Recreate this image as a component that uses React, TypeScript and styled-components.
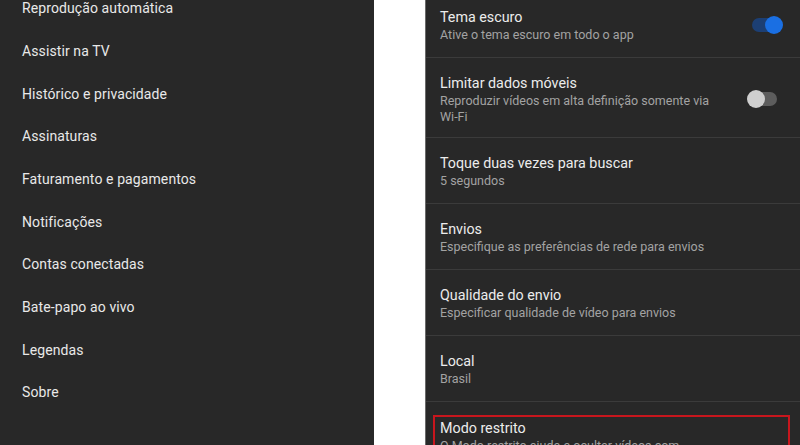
import React from "react";
import styled, { createGlobalStyle } from "styled-components";

const Global = createGlobalStyle`
  html, body { margin: 0; padding: 0; background: #ffffff; }
  body { font-family: Roboto, "Noto Sans", "Liberation Sans", sans-serif; overflow: hidden; }
`;

const Page = styled.div`
  display: grid;
  grid-template-columns: 374px 51px 375px;
  width: 800px;
  height: 445px;
  overflow: hidden;
  background: #ffffff;
`;

const LeftPanel = styled.div`
  background: #282828;
  height: 445px;
  overflow: hidden;
`;

const LeftList = styled.div`
  display: flex;
  flex-direction: column;
  margin-top: -13px;
`;

const LeftItem = styled.div`
  height: 42.67px;
  display: flex;
  align-items: center;
  padding-left: 22px;
  color: #e9e9e9;
  font-size: 14px;
  letter-spacing: 0.1px;
`;

const Gap = styled.div`
  background: #ffffff;
`;

const RightPanel = styled.div`
  background: #282828;
  height: 445px;
  overflow: hidden;
  border-left: 1px solid #6a6a6a;
`;

const RightList = styled.div`
  display: flex;
  flex-direction: column;
  margin-top: -8px;
`;

const Row = styled.div<{ $tight?: boolean }>`
  display: flex;
  align-items: center;
  justify-content: space-between;
  padding: 15px 17px ${(p) => (p.$tight ? "12px" : "14px")} 14px;
  border-bottom: 1px solid #3b3b3b;
`;

const TextBlock = styled.div`
  display: flex;
  flex-direction: column;
  max-width: 285px;
`;

const Title = styled.div`
  color: #ececec;
  font-size: 14.3px;
  line-height: 20px;
`;

const Sub = styled.div`
  color: #a3a3a3;
  font-size: 12.5px;
  line-height: 16px;
`;

const Highlight = styled.div`
  margin: 13px 10px 0 7px;
  border: 2px solid #c8161d;
  border-bottom: none;
  padding: 1px 5px 6px 5px;
`;

const Switch = styled.div`
  position: relative;
  width: 36px;
  height: 18px;
  flex-shrink: 0;
`;

const Track = styled.div<{ $on: boolean }>`
  position: absolute;
  left: 5px;
  right: 6px;
  top: 2px;
  height: 14px;
  border-radius: 7px;
  background: ${(p) => (p.$on ? "#1c3f74" : "#5d5d5d")};
`;

const Knob = styled.div<{ $on: boolean }>`
  position: absolute;
  top: 0;
  left: ${(p) => (p.$on ? "18px" : "0px")};
  width: 18px;
  height: 18px;
  border-radius: 50%;
  background: ${(p) => (p.$on ? "#1a6fe3" : "#cfcfcf")};
`;

const Toggle = ({ on }: { on: boolean }) => (
  <Switch>
    <Track $on={on} />
    <Knob $on={on} />
  </Switch>
);

const leftItems = [
  "Reprodução automática",
  "Assistir na TV",
  "Histórico e privacidade",
  "Assinaturas",
  "Faturamento e pagamentos",
  "Notificações",
  "Contas conectadas",
  "Bate-papo ao vivo",
  "Legendas",
  "Sobre",
];

type Setting = { title: string; sub: string; toggle?: boolean; tight?: boolean };

const settings: Setting[] = [
  { title: "Tema escuro", sub: "Ative o tema escuro em todo o app", toggle: true },
  {
    title: "Limitar dados móveis",
    sub: "Reproduzir vídeos em alta definição somente via Wi-Fi",
    toggle: false,
    tight: true,
  },
  { title: "Toque duas vezes para buscar", sub: "5 segundos" },
  { title: "Envios", sub: "Especifique as preferências de rede para envios" },
  { title: "Qualidade do envio", sub: "Especificar qualidade de vídeo para envios" },
  { title: "Local", sub: "Brasil" },
];

export default function App() {
  return (
    <>
      <Global />
      <Page>
        <LeftPanel>
          <LeftList>
            {leftItems.map((t) => (
              <LeftItem key={t}>{t}</LeftItem>
            ))}
          </LeftList>
        </LeftPanel>
        <Gap />
        <RightPanel>
          <RightList>
            {settings.map((s) => (
              <Row key={s.title} $tight={s.tight}>
                <TextBlock>
                  <Title>{s.title}</Title>
                  <Sub>{s.sub}</Sub>
                </TextBlock>
                {s.toggle !== undefined && <Toggle on={s.toggle} />}
              </Row>
            ))}
            <Highlight>
              <Title>Modo restrito</Title>
              <Sub>O Modo restrito ajuda a ocultar vídeos com</Sub>
            </Highlight>
          </RightList>
        </RightPanel>
      </Page>
    </>
  );
}
